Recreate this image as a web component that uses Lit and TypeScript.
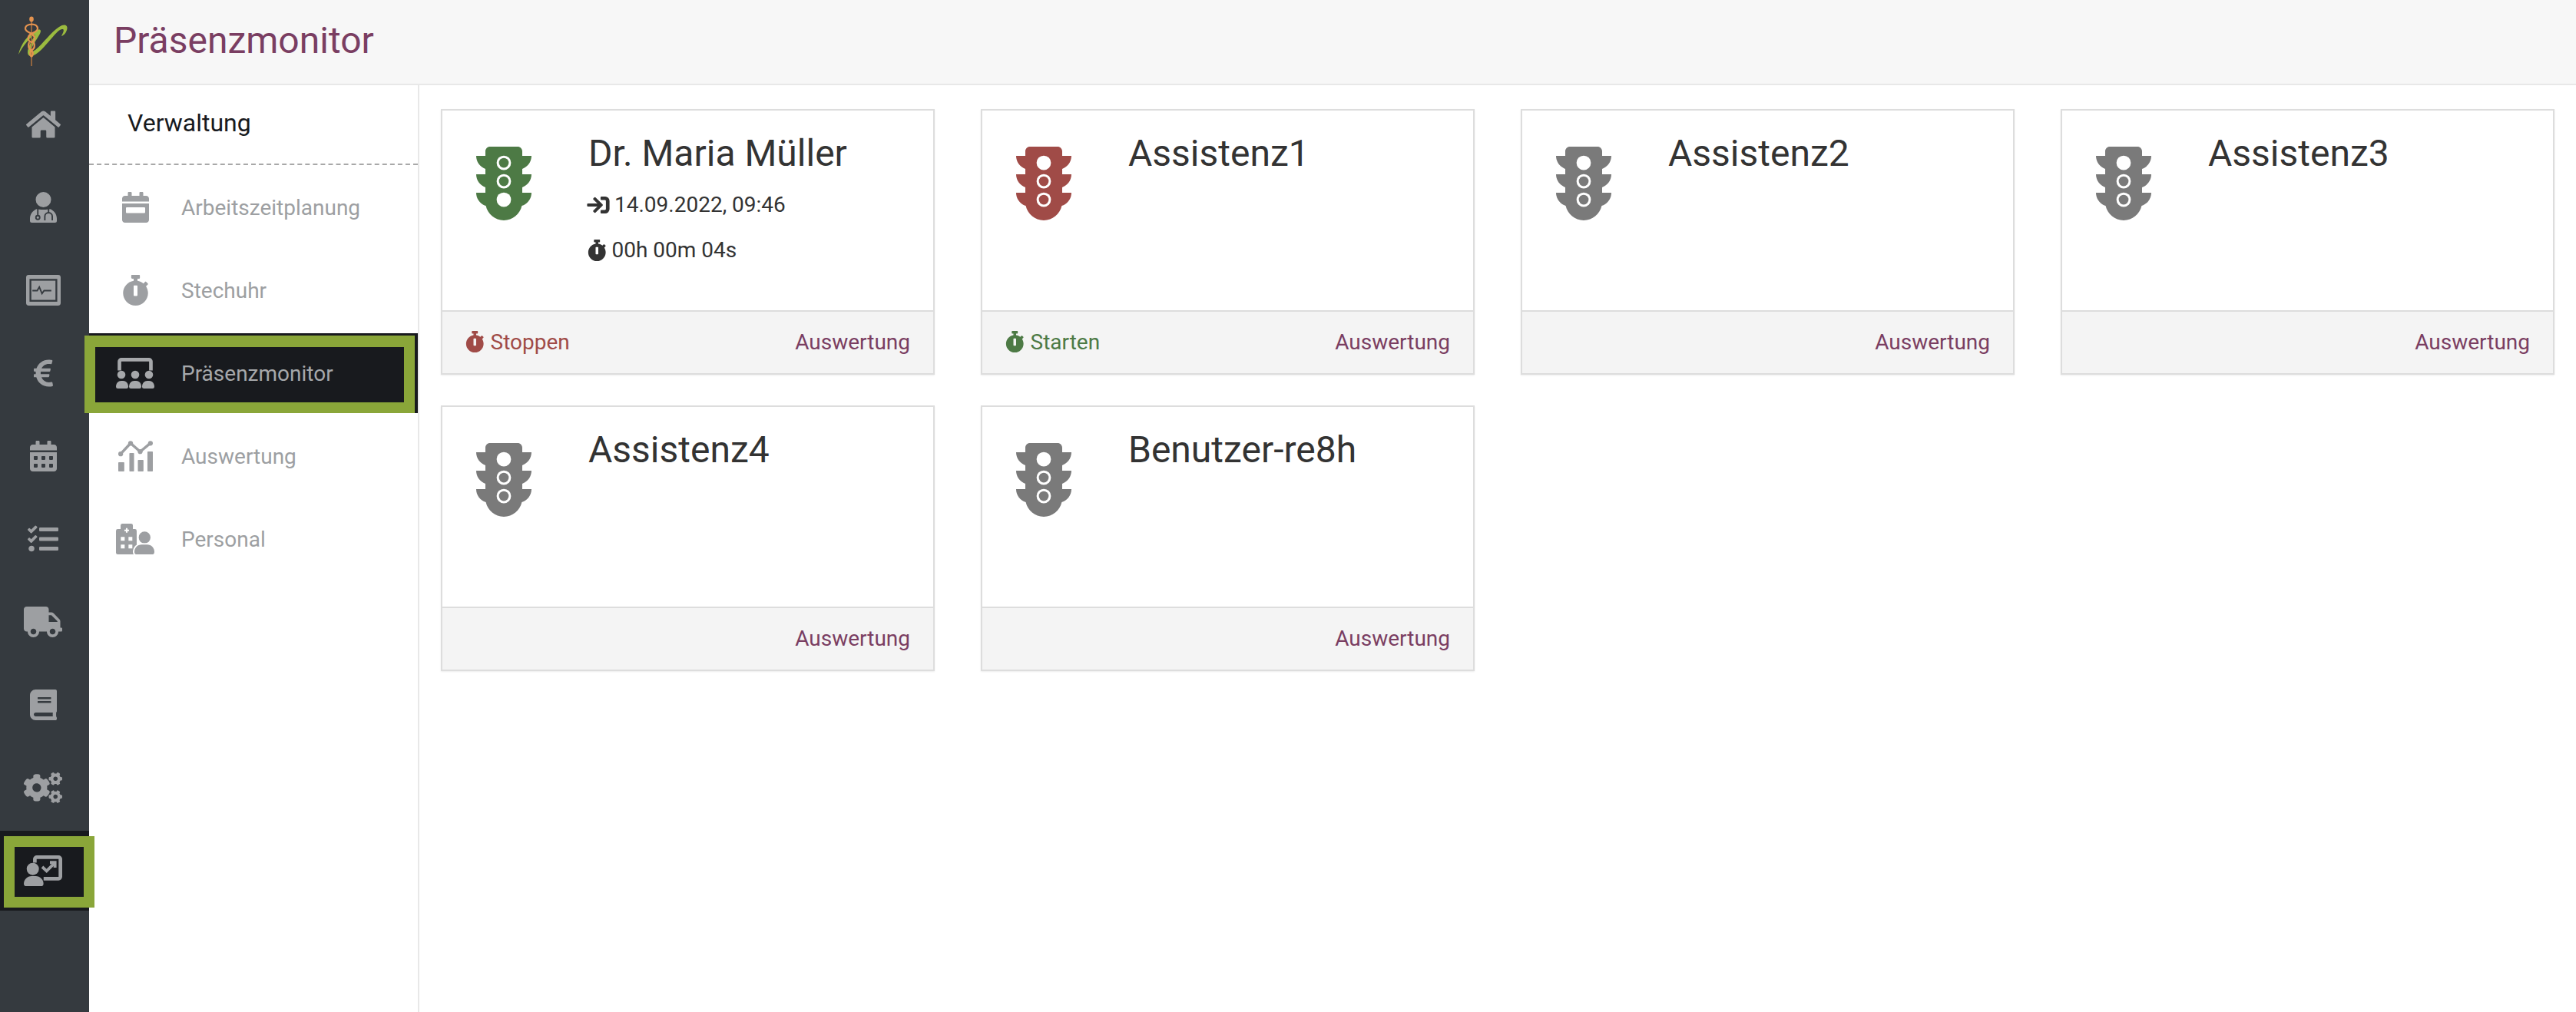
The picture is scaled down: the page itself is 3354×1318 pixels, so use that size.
import { LitElement, html, svg, css } from 'lit';
import { customElement } from 'lit/decorators.js';
import { classMap } from 'lit/directives/class-map.js';

type Icon = { w: number; body: unknown };

const fa = (w: number, d: string): Icon => ({ w, body: svg`<path d=${d}></path>` });

const CAL_TOP =
  'M400 64h-48V16c0-8.8-7.2-16-16-16h-32c-8.8 0-16 7.2-16 16v48H160V16c0-8.8-7.2-16-16-16h-32c-8.8 0-16 7.2-16 16v48H48C21.5 64 0 85.5 0 112v48h448v-48c0-26.5-21.5-48-48-48z';

const STOPWATCH =
  'M432 304c0 114.9-93.1 208-208 208S16 418.9 16 304c0-104 76.3-190.2 176-205.5V64h-28c-6.6 0-12-5.4-12-12V12c0-6.6 5.4-12 12-12h120c6.6 0 12 5.4 12 12v40c0 6.6-5.4 12-12 12h-28v34.5c37.5 5.8 71.7 21.6 99.7 44.6l27.5-27.5c4.7-4.7 12.3-4.7 17 0l28.3 28.3c4.7 4.7 4.7 12.3 0 17l-29.4 29.4-.6.6C419.7 223.3 432 262.2 432 304zm-176 36V188.5c0-6.6-5.4-12-12-12h-40c-6.6 0-12 5.4-12 12V340c0 6.6 5.4 12 12 12h40c6.6 0 12-5.4 12-12z';

const TRAFFIC =
  'M384 192h-64v-37.88c37.2-13.22 64-48.38 64-90.12h-64V32c0-17.67-14.33-32-32-32H96C78.33 0 64 14.33 64 32v32H0c0 41.74 26.8 76.9 64 90.12V192H0c0 41.74 26.8 76.9 64 90.12V320H0c0 42.84 28.25 78.69 66.99 91.05 12.98 57.7 64.29 100.95 125.01 100.95s112.03-43.25 125.01-100.95C355.75 398.69 384 362.84 384 320h-64v-37.88c37.2-13.22 64-48.38 64-90.12z';

const ICONS: Record<string, Icon> = {
  home: fa(576, 'M280.37 148.26L96 300.11V464a16 16 0 0 0 16 16l112.06-.29a16 16 0 0 0 15.92-16V368a16 16 0 0 1 16-16h64a16 16 0 0 1 16 16v95.64a16 16 0 0 0 16 16.05L464 480a16 16 0 0 0 16-16V300L295.67 148.26a12.19 12.19 0 0 0-15.3 0zM571.6 251.47L488 182.56V44.05a12 12 0 0 0-12-12h-56a12 12 0 0 0-12 12v72.61L318.47 43a48 48 0 0 0-61 0L4.34 251.47a12 12 0 0 0-1.6 16.9l25.5 31A12 12 0 0 0 45.15 301l235.22-193.74a12.19 12.19 0 0 1 15.3 0L530.9 301a12 12 0 0 0 16.9-1.6l25.5-31a12 12 0 0 0-1.7-16.93z'),
  doctor: {
    w: 448,
    body: svg`
      <circle cx="224" cy="128" r="128"></circle>
      <path d="M112 284C48 306 0 372 0 445v35a32 32 0 0 0 32 32h384a32 32 0 0 0 32-32v-35c0-73-48-139-112-161-36 14-188 14-224 0z"></path>
      <g class="cut">
        <path d="M131 280v114" stroke-width="24"></path>
        <circle cx="131" cy="426" r="32" stroke-width="24"></circle>
        <path d="M310 280v65M248 474v-67a62 62 0 0 1 124 0v67" stroke-width="24"></path>
      </g>`,
  },
  monitor: {
    w: 576,
    body: svg`
      <rect width="576" height="512" rx="44"></rect>
      <g class="cut">
        <rect x="72" y="82" width="432" height="350" stroke-width="30"></rect>
        <path d="M105 262h80l35-60 45 110 35-50h120" stroke-width="24"></path>
      </g>`,
  },
  euro: fa(320, 'M310.706 413.765c-1.314-6.63-7.835-10.872-14.424-9.369-10.692 2.439-27.422 5.413-45.426 5.413-56.763 0-101.929-34.79-121.461-85.449h113.689a12 12 0 0 0 11.708-9.369l6.373-28.36c1.686-7.502-4.019-14.631-11.708-14.631H115.22c-1.21-14.328-1.414-28.287.137-42.245H261.95a12 12 0 0 0 11.723-9.434l6.512-29.755c1.638-7.484-4.061-14.566-11.723-14.566H130.184c20.633-44.991 62.69-75.03 117.619-75.03 14.486 0 28.564 2.25 37.851 4.145 6.216 1.268 12.347-2.498 14.002-8.623l11.991-44.368c1.822-6.741-2.465-13.616-9.326-14.917C290.217 34.912 270.71 32 249.635 32 152.451 32 74.03 92.252 45.075 176H12c-6.627 0-12 5.373-12 12v29.755c0 6.627 5.373 12 12 12h21.569c-1.009 13.607-1.181 29.287-.181 42.245H12c-6.627 0-12 5.373-12 12v28.36c0 6.627 5.373 12 12 12h30.114C67.139 414.692 145.264 480 249.635 480c26.301 0 48.562-4.544 61.101-7.788 6.167-1.595 10.027-7.708 8.788-13.957l-8.818-44.49z'),
  calendar: fa(448, `M0 464c0 26.5 21.5 48 48 48h352c26.5 0 48-21.5 48-48V192H0v272zm320-196c0-6.6 5.4-12 12-12h40c6.6 0 12 5.4 12 12v40c0 6.6-5.4 12-12 12h-40c-6.6 0-12-5.4-12-12v-40zm0 128c0-6.6 5.4-12 12-12h40c6.6 0 12 5.4 12 12v40c0 6.6-5.4 12-12 12h-40c-6.6 0-12-5.4-12-12v-40zM192 268c0-6.6 5.4-12 12-12h40c6.6 0 12 5.4 12 12v40c0 6.6-5.4 12-12 12h-40c-6.6 0-12-5.4-12-12v-40zm0 128c0-6.6 5.4-12 12-12h40c6.6 0 12 5.4 12 12v40c0 6.6-5.4 12-12 12h-40c-6.6 0-12-5.4-12-12v-40zM64 268c0-6.6 5.4-12 12-12h40c6.6 0 12 5.4 12 12v40c0 6.6-5.4 12-12 12H76c-6.6 0-12-5.4-12-12v-40zm0 128c0-6.6 5.4-12 12-12h40c6.6 0 12 5.4 12 12v40c0 6.6-5.4 12-12 12H76c-6.6 0-12-5.4-12-12v-40z${CAL_TOP}`),
  tasks: fa(512, 'M139.61 35.5a12 12 0 0 0-17 0L58.93 98.81l-22.7-22.12a12 12 0 0 0-17 0L3.53 92.41a12 12 0 0 0 0 17l47.59 47.4a12.78 12.78 0 0 0 17.61 0l15.59-15.62L156.52 69a12.09 12.09 0 0 0 .09-17zm0 159.19a12 12 0 0 0-17 0l-63.68 63.72-22.7-22.1a12 12 0 0 0-17 0L3.53 252a12 12 0 0 0 0 17L51 316.5a12.77 12.77 0 0 0 17.6 0l15.7-15.69 72.2-72.22a12 12 0 0 0 .09-16.9zM64 368c-26.49 0-48.59 21.5-48.59 48S37.53 464 64 464a48 48 0 0 0 0-96zm432 16H208a16 16 0 0 0-16 16v32a16 16 0 0 0 16 16h288a16 16 0 0 0 16-16v-32a16 16 0 0 0-16-16zm0-320H208a16 16 0 0 0-16 16v32a16 16 0 0 0 16 16h288a16 16 0 0 0 16-16V80a16 16 0 0 0-16-16zm0 160H208a16 16 0 0 0-16 16v32a16 16 0 0 0 16 16h288a16 16 0 0 0 16-16v-32a16 16 0 0 0-16-16z'),
  truck: fa(640, 'M624 352h-16V243.9c0-12.7-5.1-24.9-14.1-33.9L494 110.1c-9-9-21.2-14.1-33.9-14.1H416V48c0-26.5-21.5-48-48-48H48C21.5 0 0 21.5 0 48v320c0 26.5 21.5 48 48 48h16c0 53 43 96 96 96s96-43 96-96h128c0 53 43 96 96 96s96-43 96-96h48c8.8 0 16-7.2 16-16v-32c0-8.8-7.2-16-16-16zM160 464c-26.5 0-48-21.5-48-48s21.5-48 48-48 48 21.5 48 48-21.5 48-48 48zm320 0c-26.5 0-48-21.5-48-48s21.5-48 48-48 48 21.5 48 48-21.5 48-48 48zm80-208H416V144h44.1l99.9 99.9V256z'),
  book: fa(448, 'M448 360V24c0-13.3-10.7-24-24-24H96C43 0 0 43 0 96v320c0 53 43 96 96 96h328c13.3 0 24-10.7 24-24v-16c0-7.5-3.5-14.3-8.9-18.7-4.2-15.4-4.2-59.3 0-74.7 5.4-4.3 8.9-11.1 8.9-18.6zM128 134c0-3.3 2.7-6 6-6h212c3.3 0 6 2.7 6 6v20c0 3.3-2.7 6-6 6H134c-3.3 0-6-2.7-6-6v-20zm0 64c0-3.3 2.7-6 6-6h212c3.3 0 6 2.7 6 6v20c0 3.3-2.7 6-6 6H134c-3.3 0-6-2.7-6-6v-20zm253.4 250H96c-17.7 0-32-14.3-32-32 0-17.6 14.4-32 32-32h285.4c-1.9 17.1-1.9 46.9 0 64z'),
  cogs: fa(640, 'M512.1 191l-8.2 14.3c-3 5.3-9.4 7.5-15.1 5.4-11.8-4.4-22.6-10.7-32.1-18.6-4.6-3.8-5.8-10.5-2.8-15.7l8.2-14.3c-6.9-8-12.3-17.3-15.9-27.4h-16.5c-6 0-11.2-4.3-12.2-10.3-2-12-2.1-24.6 0-37.1 1-6 6.2-10.4 12.2-10.4h16.5c3.6-10.1 9-19.4 15.9-27.4l-8.2-14.3c-3-5.2-1.9-11.9 2.8-15.7 9.5-7.9 20.4-14.2 32.1-18.6 5.7-2.1 12.1.1 15.1 5.4l8.2 14.3c10.5-1.9 21.2-1.9 31.7 0L552 6.3c3-5.3 9.4-7.5 15.1-5.4 11.8 4.4 22.6 10.7 32.1 18.6 4.6 3.8 5.8 10.5 2.8 15.7l-8.2 14.3c6.9 8 12.3 17.3 15.9 27.4h16.5c6 0 11.2 4.3 12.2 10.3 2 12 2.1 24.6 0 37.1-1 6-6.2 10.4-12.2 10.4h-16.5c-3.6 10.1-9 19.4-15.9 27.4l8.2 14.3c3 5.2 1.9 11.9-2.8 15.7-9.5 7.9-20.4 14.2-32.1 18.6-5.7 2.1-12.1-.1-15.1-5.4l-8.2-14.3c-10.4 1.9-21.2 1.9-31.7 0zm-10.5-58.8c38.5 29.6 82.4-14.3 52.8-52.8-38.5-29.7-82.4 14.3-52.8 52.8zM386.3 286.1l33.7 16.8c10.1 5.8 14.5 18.1 10.5 29.1-8.9 24.2-26.4 46.4-42.6 65.8-7.4 8.9-20.2 11.1-30.3 5.3l-29.1-16.8c-16 13.7-34.6 24.6-54.9 31.7v33.6c0 11.6-8.3 21.6-19.7 23.6-24.6 4.2-50.4 4.4-75.9 0-11.5-2-20-11.9-20-23.6V418c-20.3-7.2-38.9-18-54.9-31.7L74 403c-10 5.8-22.9 3.6-30.3-5.3-16.2-19.4-33.3-41.6-42.2-65.7-4-10.9.4-23.2 10.5-29.1l33.3-16.8c-3.9-20.9-3.9-42.4 0-63.4L12 205.8c-10.1-5.8-14.6-18.1-10.5-29 8.9-24.2 26-46.4 42.2-65.8 7.4-8.9 20.2-11.1 30.3-5.3l29.1 16.8c16-13.7 34.6-24.6 54.9-31.7V57.1c0-11.5 8.2-21.5 19.6-23.5 24.6-4.2 50.5-4.4 76-.1 11.5 2 20 11.9 20 23.6v33.6c20.3 7.2 38.9 18 54.9 31.7l29.1-16.8c10-5.8 22.9-3.6 30.3 5.3 16.2 19.4 33.2 41.6 42.1 65.8 4 10.9.1 23.2-10 29.1l-33.7 16.8c3.9 21 3.9 42.5 0 63.5zm-117.6 21.1c59.2-77-28.7-164.9-105.7-105.7-59.2 77 28.7 164.9 105.7 105.7zm243.4 182.7l-8.2 14.3c-3 5.3-9.4 7.5-15.1 5.4-11.8-4.4-22.6-10.7-32.1-18.6-4.6-3.8-5.8-10.5-2.8-15.7l8.2-14.3c-6.9-8-12.3-17.3-15.9-27.4h-16.5c-6 0-11.2-4.3-12.2-10.3-2-12-2.1-24.6 0-37.1 1-6 6.2-10.4 12.2-10.4h16.5c3.6-10.1 9-19.4 15.9-27.4l-8.2-14.3c-3-5.2-1.9-11.9 2.8-15.7 9.5-7.9 20.4-14.2 32.1-18.6 5.7-2.1 12.1.1 15.1 5.4l8.2 14.3c10.5-1.9 21.2-1.9 31.7 0l8.2-14.3c3-5.3 9.4-7.5 15.1-5.4 11.8 4.4 22.6 10.7 32.1 18.6 4.6 3.8 5.8 10.5 2.8 15.7l-8.2 14.3c6.9 8 12.3 17.3 15.9 27.4h16.5c6 0 11.2 4.3 12.2 10.3 2 12 2.1 24.6 0 37.1-1 6-6.2 10.4-12.2 10.4h-16.5c-3.6 10.1-9 19.4-15.9 27.4l8.2 14.3c3 5.2 1.9 11.9-2.8 15.7-9.5 7.9-20.4 14.2-32.1 18.6-5.7 2.1-12.1-.1-15.1-5.4l-8.2-14.3c-10.4 1.9-21.2 1.9-31.7 0zM501.6 431c38.5 29.6 82.4-14.3 52.8-52.8-38.5-29.6-82.4 14.3-52.8 52.8z'),
  presenter: {
    w: 640,
    body: svg`
      <circle cx="150" cy="226" r="102"></circle>
      <path d="M0 472c0-70 58-127 130-127h68c72 0 130 57 130 127a40 40 0 0 1-40 40H40a40 40 0 0 1-40-40z"></path>
      <path class="bar" stroke-width="60" d="M184 120V62a32 32 0 0 1 32-32h362a32 32 0 0 1 32 32v294a32 32 0 0 1-32 32H330"></path>
      <path class="bar" stroke-width="50" d="M307 192l73 68 128-128"></path>
      <path class="bar" stroke-width="50" d="M435 119h85v86"></path>`,
  },
  calendarWeek: fa(448, `M0 464c0 26.5 21.5 48 48 48h352c26.5 0 48-21.5 48-48V192H0v272zm64-192c0-8.8 7.2-16 16-16h288c8.8 0 16 7.2 16 16v64c0 8.8-7.2 16-16 16H80c-8.8 0-16-7.2-16-16v-64z${CAL_TOP}`),
  stopwatch: fa(448, STOPWATCH),
  screenUsers: {
    w: 640,
    body: svg`
      <path class="bar" stroke-width="60" d="M58 210V62a32 32 0 0 1 32-32h460a32 32 0 0 1 32 32v148"></path>
      <circle cx="90" cy="282" r="68"></circle>
      <circle cx="320" cy="282" r="68"></circle>
      <circle cx="550" cy="282" r="68"></circle>
      ${[0, 218, 435].map(
        (x) => svg`<path transform="translate(${x} 0)" d="M0 482c0-58 40-97 85-97h35c45 0 85 39 85 97a30 30 0 0 1-30 30H30a30 30 0 0 1-30-30z"></path>`
      )}`,
  },
  chartMixed: {
    w: 576,
    body: svg`
      <rect x="0" y="358" width="100" height="154" rx="10"></rect>
      <rect x="185" y="205" width="78" height="307" rx="10"></rect>
      <rect x="326" y="320" width="94" height="192" rx="10"></rect>
      <rect x="486" y="180" width="90" height="332" rx="10"></rect>
      <path class="line" stroke-width="44" d="M40 220L205 42l160 140 171-142"></path>
      <circle cx="40" cy="220" r="40"></circle>
      <circle cx="205" cy="42" r="40"></circle>
      <circle cx="365" cy="182" r="40"></circle>
      <circle cx="536" cy="42" r="40"></circle>`,
  },
  hospitalUser: {
    w: 640,
    body: svg`
      <path d="M0 120a30 30 0 0 1 30-30h47V30a30 30 0 0 1 30-30h145a30 30 0 0 1 30 30v60h33a30 30 0 0 1 30 30v392H30a30 30 0 0 1-30-30z"></path>
      <path class="cut" stroke-width="26" d="M179 74v76M141 112h76"></path>
      <rect class="cut-fill" x="81" y="221" width="64" height="64"></rect>
      <rect class="cut-fill" x="209" y="221" width="64" height="64"></rect>
      <rect class="cut-fill" x="81" y="349" width="64" height="64"></rect>
      <rect class="cut-fill" x="209" y="349" width="64" height="64"></rect>
      <circle class="halo" stroke-width="50" cx="477" cy="230" r="98"></circle>
      <path class="halo" stroke-width="50" d="M307 472c0-68 52-122 120-122h93c68 0 120 54 120 122a40 40 0 0 1-40 40H347a40 40 0 0 1-40-40z"></path>`,
  },
  // regular sign-in thickened a little, the reference arrow is bolder than the outline
  signIn: {
    w: 512,
    body: svg`<path class="bold" stroke-width="22" d="M416 448h-84c-6.6 0-12-5.4-12-12v-40c0-6.6 5.4-12 12-12h84c17.7 0 32-14.3 32-32V160c0-17.7-14.3-32-32-32h-84c-6.6 0-12-5.4-12-12V76c0-6.6 5.4-12 12-12h84c53 0 96 43 96 96v192c0 53-43 96-96 96zM167.1 83.5l-19.6 19.6c-4.8 4.8-4.7 12.5.2 17.1L260.8 230H12c-6.6 0-12 5.4-12 12v28c0 6.6 5.4 12 12 12h248.8L147.7 391.7c-4.8 4.7-4.9 12.4-.2 17.1l19.6 19.6c4.7 4.7 12.3 4.7 17 0l164.4-164c4.7-4.7 4.7-12.3 0-17l-164.4-164c-4.7-4.6-12.3-4.6-17 .1z"></path>`,
  },
};

const icon = (name: string, size: number) => {
  const i = ICONS[name];
  return html`<svg class="ico" viewBox="0 0 ${i.w} 512" height=${size} width=${(i.w / 512) * size}>${i.body}</svg>`;
};

const RAIL = ['home', 'doctor', 'monitor', 'euro', 'calendar', 'tasks', 'truck', 'book', 'cogs', 'presenter'];

const MENU = [
  { icon: 'calendarWeek', label: 'Arbeitszeitplanung' },
  { icon: 'stopwatch', label: 'Stechuhr' },
  { icon: 'screenUsers', label: 'Präsenzmonitor', active: true },
  { icon: 'chartMixed', label: 'Auswertung' },
  { icon: 'hospitalUser', label: 'Personal' },
];

type Person = {
  name: string;
  status: 'green' | 'red' | 'grey';
  since?: string;
  timer?: string;
  action?: 'Stoppen' | 'Starten';
};

const PEOPLE: Person[] = [
  { name: 'Dr. Maria Müller', status: 'green', since: '14.09.2022, 09:46', timer: '00h 00m 04s', action: 'Stoppen' },
  { name: 'Assistenz1', status: 'red', action: 'Starten' },
  { name: 'Assistenz2', status: 'grey' },
  { name: 'Assistenz3', status: 'grey' },
  { name: 'Assistenz4', status: 'grey' },
  { name: 'Benutzer-re8h', status: 'grey' },
];

@customElement('app-root')
export class AppRoot extends LitElement {
  static styles = css`
    :host {
      display: block;
      height: 100vh;
      font-family: Roboto, 'Liberation Sans', sans-serif;
      color: #333;
    }

    .app {
      display: flex;
      height: 100%;
      overflow: hidden;
    }

    .ico {
      display: block;
      fill: currentColor;
      flex: none;
      overflow: visible;
    }
    .cut {
      fill: none;
      stroke: var(--cut);
    }
    .cut-fill {
      fill: var(--cut);
    }
    .line {
      fill: none;
      stroke: currentColor;
      stroke-linecap: round;
      stroke-linejoin: round;
    }
    .bar {
      fill: none;
      stroke: currentColor;
    }
    .bold {
      stroke: currentColor;
    }
    .halo {
      stroke: var(--cut);
      paint-order: stroke;
    }

    /* left rail */
    .rail {
      width: 116px;
      flex: none;
      background: #353a3f;
      color: #9d9fa2;
      --cut: #353a3f;
      position: relative;
      z-index: 1;
    }
    .logo {
      display: block;
      height: 108px;
    }
    .rail-item {
      height: 108px;
      display: flex;
      align-items: center;
      padding-left: 31px;
      position: relative;
    }
    .rail-icon {
      width: 50px;
      display: flex;
      justify-content: center;
      position: relative;
      z-index: 1;
    }
    .rail-item.active {
      --cut: #181a1e;
    }
    .rail-item.active::before {
      content: '';
      position: absolute;
      inset: 2px 0;
      background: #181a1e;
    }
    .rail-item.active::after {
      content: '';
      position: absolute;
      top: 9px;
      bottom: 6px;
      left: 5px;
      right: -7px;
      border: 14px solid #8aa639;
    }

    /* main column */
    .main {
      flex: 1;
      min-width: 0;
      display: flex;
      flex-direction: column;
    }
    .topbar {
      height: 111px;
      flex: none;
      box-sizing: border-box;
      background: #f7f7f7;
      border-bottom: 2px solid #e8e8e8;
      display: flex;
      align-items: center;
      padding: 0 0 3px 32px;
    }
    .topbar h1 {
      margin: 0;
      font-size: 48px;
      font-weight: 400;
      line-height: 56px;
      color: #7a3e62;
    }
    .body {
      flex: 1;
      display: flex;
      min-height: 0;
    }

    /* sub menu */
    .menu {
      width: 430px;
      flex: none;
      box-sizing: border-box;
      border-right: 2px solid #e8e8e8;
      color: #9d9fa2;
      --cut: #fff;
      position: relative;
      z-index: 2;
    }
    .menu-head {
      height: 104px;
      box-sizing: border-box;
      border-bottom: 2px dashed #a8a8a8;
      margin-bottom: 1px;
      padding: 21px 0 0 50px;
      font-size: 32px;
      line-height: 56px;
      color: #181a1e;
    }
    .menu-item {
      height: 108px;
      display: flex;
      align-items: center;
      padding-left: 35px;
      gap: 35px;
      font-size: 28px;
      position: relative;
    }
    .menu-icon {
      width: 50px;
      display: flex;
      justify-content: center;
      position: relative;
      z-index: 1;
    }
    .menu-item span {
      position: relative;
      z-index: 1;
    }
    .menu-item.active {
      --cut: #181a1e;
      color: #a6a8ab;
    }
    .menu-item.active::before {
      content: '';
      position: absolute;
      inset: 2px 0;
      background: #181a1e;
    }
    .menu-item.active::after {
      content: '';
      position: absolute;
      top: 5px;
      bottom: 2px;
      left: -6px;
      right: 4px;
      border: 14px solid #8aa639;
      border-top-width: 15px;
    }

    /* cards */
    .content {
      flex: 1;
      min-width: 0;
      padding: 31px 28px;
      display: grid;
      grid-template-columns: repeat(4, 643px);
      grid-auto-rows: 346px;
      gap: 40px 60px;
      align-content: start;
    }
    .card {
      box-sizing: border-box;
      border: 2px solid #ddd;
      box-shadow: 0 1px 2px rgba(0, 0, 0, 0.08);
      display: flex;
      flex-direction: column;
    }
    .card-body {
      height: 260px;
      display: flex;
      padding-top: 28px;
      box-sizing: border-box;
    }
    .light {
      margin: 19px 0 0 44px;
      width: 72px;
      flex: none;
    }
    .light.green {
      color: #4d7a45;
    }
    .light.red {
      color: #a04b47;
    }
    .light.grey {
      color: #7a7a7a;
    }
    .light .lamp {
      fill: #fff;
    }
    .light .off {
      fill: currentColor;
    }
    .info {
      margin-left: 74px;
      min-width: 0;
    }
    .name {
      font-size: 48px;
      line-height: 56px;
      color: #333;
    }
    .meta {
      display: flex;
      align-items: center;
      font-size: 28px;
      line-height: 40px;
      gap: 7px;
      margin-top: 19px;
      margin-left: -1px;
    }
    .meta + .meta {
      margin-top: 19px;
    }
    .card-foot {
      flex: 1;
      border-top: 2px solid #ddd;
      background: #f4f4f4;
      display: flex;
      align-items: center;
      justify-content: space-between;
      padding: 0 30px 2px 30px;
      font-size: 28px;
    }
    .action {
      display: flex;
      align-items: center;
      gap: 8px;
    }
    .action.Stoppen {
      color: #a04b47;
    }
    .action.Starten {
      color: #4d7a45;
    }
    .report {
      margin-left: auto;
      color: #7a3e62;
    }
  `;

  private _logo() {
    return html`<svg class="logo" width="116" height="108" viewBox="0 0 116 108">
      <path fill="#9bbb3f" d="M24 71C27 58 36 44 49 39C53 37.5 54 40 52 44C47 53 41 60 41 66C41 68 43 67 46 65C56 57 66 42 77 35C83 31 88 32 87.5 37C87 41 84 46 80 47C82 43 84 39 82 38C78 37 73 43 68 49C60 58 54 66 46 71C41 74 36 74 36 68C36 61 42 52 46 45C38 49 30 60 24 71Z"></path>
      <path fill="none" stroke="#a96f3f" stroke-width="1.6" d="M41 26V86"></path>
      <ellipse cx="41" cy="25" rx="2.8" ry="3.4" fill="#e4934f"></ellipse>
      <path fill="none" stroke="#e4934f" stroke-width="2.2" d="M47 33C42 30 33 32 33 37C33 41 38 42 41 44C45 46 46 50 44 53C42 56 38 55 37 51C36 47 39 45 41 44C44 42 49 41 49 37C49 35 48 34 47 33"></path>
      <path fill="none" stroke="#e4934f" stroke-width="2.2" d="M38 55C36 60 38 64 41 66C44 68 43 72 41 74M44 55C46 60 44 64 41 66C38 68 39 72 41 74"></path>
    </svg>`;
  }

  private _light(status: Person['status']) {
    const lit = status === 'green' ? 2 : 0;
    return html`<svg class="ico light ${status}" viewBox="0 0 384 512" width="72" height="96">
      <path d=${TRAFFIC}></path>
      ${[0, 1, 2].map((i) => {
        const cy = 112 + i * 128;
        return svg`<circle class="lamp" cx="192" cy=${cy} r="50"></circle>
          ${i === lit ? '' : svg`<circle class="off" cx="192" cy=${cy} r="34"></circle>`}`;
      })}
    </svg>`;
  }

  private _card(p: Person) {
    return html`<div class="card">
      <div class="card-body">
        ${this._light(p.status)}
        <div class="info">
          <div class="name">${p.name}</div>
          ${p.since ? html`<div class="meta">${icon('signIn', 28)}<span>${p.since}</span></div>` : ''}
          ${p.timer ? html`<div class="meta">${icon('stopwatch', 28)}<span>${p.timer}</span></div>` : ''}
        </div>
      </div>
      <div class="card-foot">
        ${p.action ? html`<div class="action ${p.action}">${icon('stopwatch', 28)}<span>${p.action}</span></div>` : ''}
        <div class="report">Auswertung</div>
      </div>
    </div>`;
  }

  render() {
    return html`
      <div class="app">
        <nav class="rail">
          ${this._logo()}
          ${RAIL.map(
            (name, i) => html`<div class=${classMap({ 'rail-item': true, active: i === RAIL.length - 1 })}>
              <div class="rail-icon">${icon(name, 40)}</div>
            </div>`
          )}
        </nav>
        <div class="main">
          <header class="topbar"><h1>Präsenzmonitor</h1></header>
          <div class="body">
            <aside class="menu">
              <div class="menu-head">Verwaltung</div>
              ${MENU.map(
                (m) => html`<div class=${classMap({ 'menu-item': true, active: !!m.active })}>
                  <div class="menu-icon">${icon(m.icon, 40)}</div>
                  <span>${m.label}</span>
                </div>`
              )}
            </aside>
            <main class="content">${PEOPLE.map((p) => this._card(p))}</main>
          </div>
        </div>
      </div>
    `;
  }
}

declare global {
  interface HTMLElementTagNameMap {
    'app-root': AppRoot;
  }
}
